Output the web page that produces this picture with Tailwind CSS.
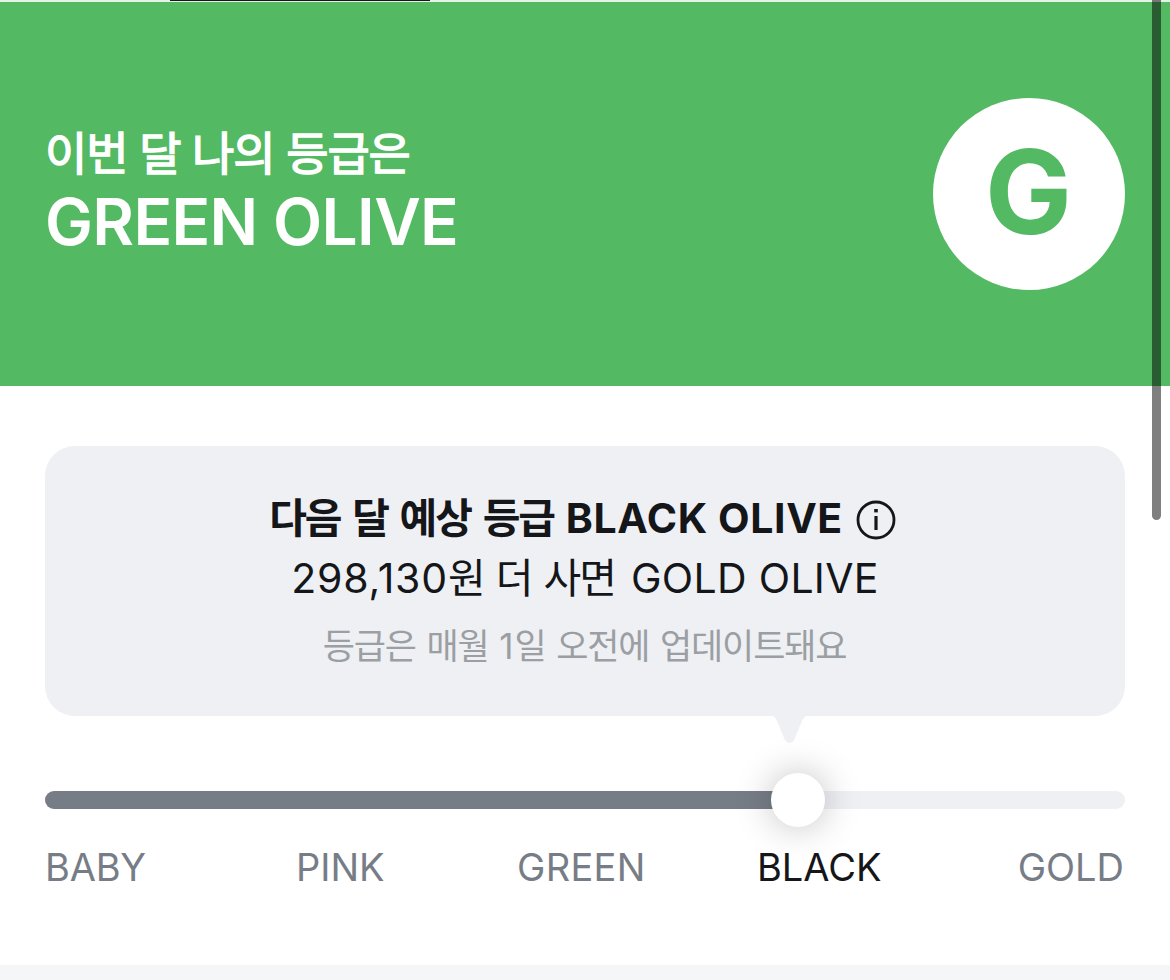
<!DOCTYPE html>
<html lang="ko">
<head>
  <meta charset="UTF-8">
  <meta name="viewport" content="width=device-width, initial-scale=1.0">
  <title>GREEN OLIVE</title>
  <script src="https://cdn.jsdelivr.net/npm/@tailwindcss/browser@4"></script>
</head>
<body class="relative h-[980px] overflow-hidden bg-white font-['Inter','Noto_Sans_CJK_KR',sans-serif] text-[#141619]">
  <!-- selected tab underline -->
  <div class="h-0.5 bg-[#e6f1e8] px-[170px]">
    <div class="h-px w-[260px] bg-[#141619]"></div>
  </div>

  <header class="flex h-96 items-center justify-between bg-[#54b963] px-[45px] text-white">
    <div class="pb-2.5">
      <p class="h-[66px] whitespace-nowrap text-[46px] leading-[66px] tracking-[-1.15px] [-webkit-text-stroke:1.4px_white]">이번 달 나의 등급은</p>
      <h1 class="h-[72px] whitespace-nowrap text-[64px] leading-[72px] font-semibold tracking-[-0.65px]">GREEN OLIVE</h1>
    </div>
    <div class="flex size-48 items-center justify-center rounded-full bg-white">
      <span class="pr-px pb-1 text-[116px] leading-none font-bold text-[#54b963]">G</span>
    </div>
  </header>

  <main class="px-[45px] pt-[60px]">
    <section class="relative h-[270px] rounded-[30px] bg-[#eff0f4] pt-[42px] text-center whitespace-nowrap">
      <div class="flex h-[60px] items-center justify-center gap-[13px] pr-[5px]">
        <h2 class="text-[41px] leading-[60px] font-bold"><span class="tracking-[-2.1px] [word-spacing:4.2px]">다음 달 예상 등급 </span><span class="tracking-[0.6px]">BLACK OLIVE</span></h2>
        <svg class="mt-[3px] size-10" viewBox="0 0 40 40" fill="none">
          <circle cx="20" cy="20" r="18" stroke="#141619" stroke-width="2.8"/>
          <path d="M20 16V30" stroke="#141619" stroke-width="3.2"/>
          <path d="M20 9V12.4" stroke="#141619" stroke-width="3.6"/>
        </svg>
      </div>
      <p class="h-[60px] text-[41px] leading-[60px]"><span class="tracking-[0.8px]">298,130</span><span class="tracking-[-2.2px] [word-spacing:3px]">원 더 사면 </span><span class="pl-1 tracking-[0.3px]">GOLD OLIVE</span></p>
      <p class="mt-2 h-[60px] pr-px text-[35px] leading-[60px] tracking-[-1.15px] text-[#9b9fa3] [word-spacing:2px]">등급은 매월 <span class="tracking-[0.8px]">1</span>일 오전에 업데이트돼요</p>
      <svg class="absolute top-[269px] left-[728px] h-7 w-[33px]" viewBox="0 0 33 28" fill="#eff0f4">
        <path d="M0 0H33V1C31 2 30 4 29 6L21.5 24Q19.5 28 16.5 28Q13.5 28 11.5 24L4 6C3 4 2 2 0 1Z"/>
      </svg>
    </section>

    <div class="relative mt-[75px] h-[18px] rounded-full bg-[#eff0f4]">
      <div class="h-full rounded-full bg-[#777d86]" style="width: 70%"></div>
      <div class="absolute top-[-18px] left-[726px] size-[54px] rounded-full bg-white shadow-[0_0_36px_rgba(0,0,0,0.25)]"></div>
    </div>

    <div class="relative mt-7 grid h-[60px] grid-cols-[251px_221px_240px_1fr_auto] pr-px text-[38px] leading-[60px] text-[#777d86]">
      <span class="tracking-[-0.2px]">BABY</span>
      <span>PINK</span>
      <span class="tracking-[0.3px]">GREEN</span>
      <span class="text-[#141619]">BLACK</span>
      <span>GOLD</span>
    </div>
  </main>

  <footer class="mt-[68px] h-4 bg-[#f5f6f8]"></footer>

  <!-- scroll indicator -->
  <div class="absolute top-0 right-[9px] h-[520px] w-[9px] rounded-b-full bg-black/50"></div>
</body>
</html>
